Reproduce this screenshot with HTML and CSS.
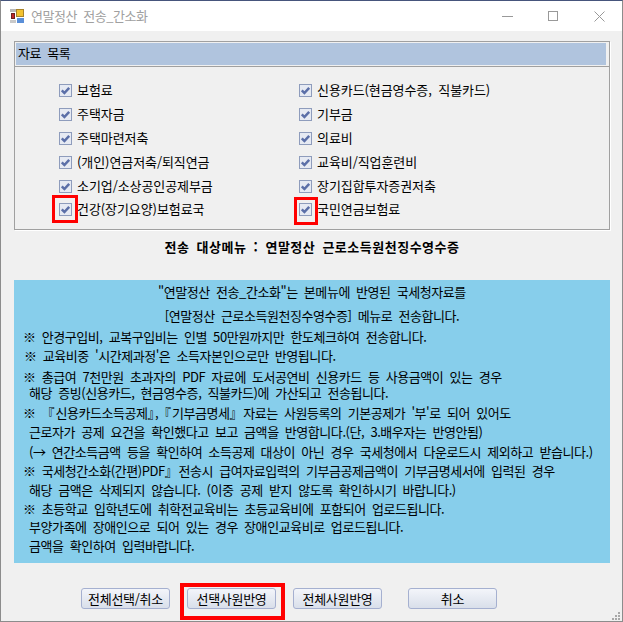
FILE: index.html
```html
<!DOCTYPE html>
<html lang="ko">
<head>
    <meta charset="UTF-8">
    <title>연말정산 전송_간소화</title>
    <link rel="stylesheet" href="styles.css">
</head>
<body>
    <svg class="defs" width="0" height="0">
        <symbol id="check" viewBox="0 0 13 13">
            <rect x="0.5" y="0.5" width="12" height="12" fill="#e6eaf3" stroke="#8e9cbc"/>
            <path d="M2.8 6.3 L5.4 9 L10.2 3.8" fill="none" stroke="#5b6fa8" stroke-width="2.5"/>
        </symbol>
    </svg>

    <div class="window">
        <div class="titlebar">
            <svg class="app-icon" width="14" height="14" viewBox="0 0 14 14">
                <rect x="0" y="0" width="6" height="3" fill="#b9b9b9"/>
                <rect x="6.5" y="0.5" width="7" height="7" fill="#f2c230" stroke="#a8832a" stroke-width="1"/>
                <rect x="1.5" y="4.5" width="3" height="5" fill="#c0262a" stroke="#6b2020" stroke-width="1"/>
                <rect x="0" y="11" width="6" height="3" fill="#c9c9c9"/>
                <rect x="7" y="9" width="7" height="5" fill="#5a8fd8"/>
            </svg>
            <span class="title">연말정산 전송_간소화</span>
            <div class="controls">
                <svg width="11" height="11" viewBox="0 0 11 11"><path d="M0 5.5 H11" stroke="#999"/></svg>
                <svg width="11" height="11" viewBox="0 0 11 11"><rect x="0.5" y="0.5" width="9" height="9" fill="none" stroke="#999"/></svg>
                <svg width="11" height="11" viewBox="0 0 11 11"><path d="M0.5 0.5 L10.5 10.5 M10.5 0.5 L0.5 10.5" stroke="#999"/></svg>
            </div>
        </div>

        <div class="content">
            <div class="group">
                <div class="group-head">자료 목록</div>
                <div class="check-list">
                    <label class="check-item"><span class="box"><svg width="13" height="13"><use href="#check"/></svg></span>보험료</label>
                    <label class="check-item"><span class="box"><svg width="13" height="13"><use href="#check"/></svg></span>신용카드(현금영수증, 직불카드)</label>
                    <label class="check-item"><span class="box"><svg width="13" height="13"><use href="#check"/></svg></span>주택자금</label>
                    <label class="check-item"><span class="box"><svg width="13" height="13"><use href="#check"/></svg></span>기부금</label>
                    <label class="check-item"><span class="box"><svg width="13" height="13"><use href="#check"/></svg></span>주택마련저축</label>
                    <label class="check-item"><span class="box"><svg width="13" height="13"><use href="#check"/></svg></span>의료비</label>
                    <label class="check-item"><span class="box"><svg width="13" height="13"><use href="#check"/></svg></span>(개인)연금저축/퇴직연금</label>
                    <label class="check-item"><span class="box"><svg width="13" height="13"><use href="#check"/></svg></span>교육비/직업훈련비</label>
                    <label class="check-item"><span class="box"><svg width="13" height="13"><use href="#check"/></svg></span>소기업/소상공인공제부금</label>
                    <label class="check-item"><span class="box"><svg width="13" height="13"><use href="#check"/></svg></span>장기집합투자증권저축</label>
                    <label class="check-item last"><span class="box"><svg width="13" height="13"><use href="#check"/></svg><i class="mark mark-left"></i></span>건강(장기요양)보험료국</label>
                    <label class="check-item last"><span class="box"><svg width="13" height="13"><use href="#check"/></svg><i class="mark mark-right"></i></span>국민연금보험료</label>
                </div>
            </div>

            <div class="target-menu">전송 대상메뉴 : 연말정산 근로소득원천징수영수증</div>

            <div class="notice">
                <div class="line center">"연말정산 전송_간소화"는 본메뉴에 반영된 국세청자료를</div>
                <div class="line center mt8">[연말정산 근로소득원천징수영수증] 메뉴로 전송합니다.</div>
                <div class="line mt5">※ 안경구입비, 교복구입비는 인별 50만원까지만 한도체크하여 전송합니다.</div>
                <div class="line nudge">※ 교육비중 '시간제과정'은 소득자본인으로만 반영됩니다.</div>
                <div class="line mt5">※ 총급여 7천만원 초과자의 PDF 자료에 도서공연비 신용카드 등 사용금액이 있는 경우</div>
                <div class="line sub mt0">해당 증빙(신용카드, 현금영수증, 직불카드)에 가산되고 전송됩니다.</div>
                <div class="line mt4">※ &nbsp;<span class="bracket">『</span>신용카드소득공제<span class="bracket">』</span>, <span class="bracket">『</span>기부금명세<span class="bracket">』</span> 자료는 사원등록의 기본공제가 '부'로 되어 있어도</div>
                <div class="line sub">근로자가 공제 요건을 확인했다고 보고 금액을 반영합니다.(단, 3.배우자는 반영안됨)</div>
                <div class="line sub mt4">(→ 연간소득금액 등을 확인하여 소득공제 대상이 아닌 경우 국세청에서 다운로드시 제외하고 받습니다.)</div>
                <div class="line">※ 국세청간소화(간편)PDF<span class="bracket">』</span> 전송시 급여자료입력의 기부금공제금액이 기부금명세서에 입력된 경우</div>
                <div class="line sub">해당 금액은 삭제되지 않습니다. (이중 공제 받지 않도록 확인하시기 바랍니다.)</div>
                <div class="line">※ 초등학교 입학년도에 취학전교육비는 초등교육비에 포함되어 업로드됩니다.</div>
                <div class="line sub mt2">부양가족에 장애인으로 되어 있는 경우 장애인교육비로 업로드됩니다.</div>
                <div class="line sub">금액을 확인하여 입력바랍니다.</div>
            </div>

            <div class="buttons">
                <button class="btn">전체선택/취소</button>
                <span class="btn-mark"><button class="btn">선택사원반영</button></span>
                <button class="btn">전체사원반영</button>
                <button class="btn btn-cancel">취소</button>
            </div>
        </div>

        <svg class="grip" width="8" height="8" viewBox="0 0 8 8" fill="#a8a8a8">
            <rect x="6" y="0" width="2" height="2"/>
            <rect x="3" y="3" width="2" height="2"/><rect x="6" y="3" width="2" height="2"/>
            <rect x="0" y="6" width="2" height="2"/><rect x="3" y="6" width="2" height="2"/><rect x="6" y="6" width="2" height="2"/>
        </svg>
    </div>
</body>
</html>
```

FILE: styles.css
```css
* { margin: 0; padding: 0; box-sizing: border-box; }
body {
    font-family: "Noto Sans CJK KR", "Noto Sans", sans-serif;
    font-size: 13px;
    color: #000;
    letter-spacing: -0.45px;
    word-spacing: 3px;
    background: #f0f0f0;
}
.defs { position: absolute; }

.window {
    position: relative;
    width: 623px; height: 622px;
    display: flex; flex-direction: column;
    border: 1px solid #8c8c8c;
    border-top-color: #46557c;
    background: #f0f0f0;
    overflow: hidden;
}

.titlebar {
    height: 30px;
    flex-shrink: 0;
    display: flex; align-items: center;
    padding-left: 9px;
    background: #fff;
}
.app-icon { margin-right: 7px; }
.title { color: #a0a0a0; font-size: 13px; line-height: 28px; }
.controls {
    margin-left: auto;
    display: flex; gap: 35px;
    padding-right: 17px;
}

.content {
    flex-grow: 1;
    display: flex; flex-direction: column;
    padding: 10px 12px 0 13px;
}

.group {
    height: 189px;
    flex-shrink: 0;
    border: 1px solid #a0a0a0;
    box-shadow: 1px 1px 0 #fff;
    padding: 1px 3px 0 1px;
}
.group-head {
    height: 22px;
    line-height: 19px;
    padding-left: 2px;
    background: #b0c4de;
    font-size: 13px;
}
.check-list {
    margin: 1px -3px 0 -1px;
    border-top: 1px solid #a0a0a0;
    padding: 10px 0 0 44px;
    display: grid;
    grid-template-columns: 240px 240px;
    grid-auto-rows: 24px;
}
.check-item {
    display: flex; align-items: center;
    white-space: nowrap;
    letter-spacing: -0.08px;
}
.check-item.last { margin-top: -1px; }
.box {
    position: relative;
    width: 13px; height: 13px;
    margin: 2px 5px 0 0;
    flex-shrink: 0;
}
.box svg { display: block; }
.mark {
    position: absolute;
    border: 3px solid #f00;
}
.mark-left { left: -7px; top: -8px; width: 26px; height: 28px; }
.mark-right { left: -5px; top: -6px; width: 24px; height: 28px; }

.target-menu {
    height: 50px;
    flex-shrink: 0;
    text-align: center;
    font-weight: 700;
    line-height: 34px;
    letter-spacing: 0.5px;
    word-spacing: 3px;
}

.notice {
    height: 283px;
    flex-shrink: 0;
    padding: 4px 0 0 9px;
    background: #87ceeb;
}
.line {
    height: 16px;
    line-height: 16px;
    margin-top: 3px;
    white-space: nowrap;
}
.line:first-child { margin-top: 0; }
.center { text-align: center; padding-right: 9px; }
.sub { padding-left: 6px; }
.nudge { padding-left: 1px; }
.bracket { font-feature-settings: "halt"; letter-spacing: 1px; }
.mt0 { margin-top: 0; }
.mt2 { margin-top: 2px; }
.mt4 { margin-top: 4px; }
.mt5 { margin-top: 5px; }
.mt8 { margin-top: 8px; }

.buttons {
    display: flex; gap: 17px;
    padding: 25px 0 0 67px;
}
.btn {
    width: 89px; height: 21px;
    font-family: inherit;
    font-size: 13px;
    letter-spacing: -0.3px;
    color: #000;
    border: 1px solid #a5b0d0;
    border-radius: 3px;
    background: linear-gradient(#f3f5fa, #d9dfea);
}
.btn-cancel { margin-left: 9px; }
.btn-mark {
    display: block;
    position: relative;
}
.btn-mark::after {
    content: "";
    position: absolute;
    left: -7px; top: -5px; right: -9px; bottom: -11px;
    border: 4px solid #f00;
}

.grip {
    position: absolute;
    right: 2px; bottom: 1px;
}
```
